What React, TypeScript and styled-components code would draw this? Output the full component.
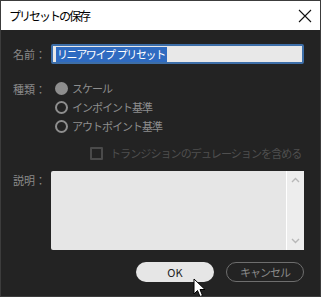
import styled, { createGlobalStyle } from "styled-components";

const GlobalStyle = createGlobalStyle`
  html, body {
    margin: 0;
    padding: 0;
    background: #232323;
  }
  body {
    font-family: "Noto Sans CJK JP", "Noto Sans", sans-serif;
  }
`;

const Window = styled.div`
  position: relative;
  width: 321px;
  height: 297px;
  box-sizing: border-box;
  border: 1px solid #3c3c3c;
  background: #232323;
  overflow: hidden;
`;

const TitleBar = styled.div`
  height: 29px;
  background: #ffffff;
  display: flex;
  align-items: center;
  justify-content: space-between;
  padding: 0 8px 0 8px;
  font-size: 12px;
  letter-spacing: -2px;
  color: #000;
`;

const Form = styled.div`
  display: grid;
  grid-template-columns: 50px 1fr;
  padding: 14px 16px 0 0;
`;

const Label = styled.div<{ $top?: number }>`
  text-align: right;
  padding-right: 5px;
  padding-top: ${(p) => p.$top ?? 0}px;
  font-size: 11px;
  color: #8a8a8a;
  line-height: 16px;
`;

const NameInput = styled.div`
  height: 20px;
  box-sizing: border-box;
  border: 2px solid #3d6ea8;
  border-radius: 2px;
  background: #e8e8e8;
  display: flex;
  align-items: center;
  padding-left: 3px;
`;

const Selected = styled.span`
  background: #2f6bc1;
  color: #fff;
  font-size: 11px;
  letter-spacing: -1.4px;
  line-height: 15px;
  padding: 0 2px 0 1px;
  white-space: pre;
`;

const Radios = styled.div`
  display: flex;
  flex-direction: column;
  gap: 1px;
  padding-top: 15px;
`;

const RadioRow = styled.div`
  display: flex;
  align-items: center;
  height: 18px;
  gap: 4px;
  font-size: 11px;
  letter-spacing: -1px;
  color: #8e8e8e;
`;

const RadioDot = styled.span<{ $on?: boolean }>`
  width: 13px;
  height: 13px;
  box-sizing: border-box;
  border-radius: 50%;
  border: 2px solid #8e8e8e;
  background: ${(p) => (p.$on ? "#8e8e8e" : "transparent")};
  margin-left: 4px;
`;

const CheckRow = styled.div`
  grid-column: 2;
  display: flex;
  align-items: center;
  gap: 7px;
  margin: 10px 0 0 39px;
  font-size: 11px;
  letter-spacing: -0.9px;
  color: #4f4f4f;
  white-space: nowrap;
`;

const CheckBox = styled.span`
  width: 13px;
  height: 13px;
  box-sizing: border-box;
  border: 2px solid #4a4a4a;
  border-radius: 1px;
`;

const TextArea = styled.div`
  margin-top: 10px;
  height: 79px;
  background: #e6e6e6;
  border-radius: 2px;
  display: flex;
  justify-content: flex-end;
`;

const ScrollBar = styled.div`
  width: 17px;
  border-left: 1px solid #ffffff;
  background: #ededed;
  display: flex;
  flex-direction: column;
  justify-content: space-between;
  align-items: center;
  padding: 6px 0;
`;

const Buttons = styled.div`
  display: flex;
  justify-content: flex-end;
  gap: 12px;
  padding: 12px 16px 0 0;
`;

const Button = styled.div<{ $primary?: boolean }>`
  width: 78px;
  height: 20px;
  box-sizing: border-box;
  border-radius: 10px;
  display: flex;
  align-items: center;
  justify-content: center;
  font-size: 11px;
  letter-spacing: ${(p) => (p.$primary ? "0" : "-1px")};
  background: ${(p) => (p.$primary ? "#e6e6e6" : "transparent")};
  border: ${(p) => (p.$primary ? "none" : "1px solid #6e6e6e")};
  color: ${(p) => (p.$primary ? "#222" : "#8a8a8a")};
`;

const Cursor = styled.svg`
  position: absolute;
  left: 192px;
  top: 277px;
`;

const Chevron = ({ up }: { up?: boolean }) => (
  <svg width="9" height="6" viewBox="0 0 9 6">
    <path
      d={up ? "M1 5 L4.5 1.5 L8 5" : "M1 1 L4.5 4.5 L8 1"}
      fill="none"
      stroke="#b8b8b8"
      strokeWidth="1.4"
    />
  </svg>
);

const App = () => (
  <>
    <GlobalStyle />
    <Window>
      <TitleBar>
        <span>プリセットの保存</span>
        <svg width="14" height="14" viewBox="0 0 14 14">
          <path d="M1 1 L13 13 M13 1 L1 13" stroke="#111" strokeWidth="1.1" />
        </svg>
      </TitleBar>
      <Form>
        <Label $top={2}>名前：</Label>
        <NameInput>
          <Selected>{"リニアワイプ  プリセット"}</Selected>
        </NameInput>
        <Label $top={17}>種類：</Label>
        <Radios>
          <RadioRow>
            <RadioDot $on />
            スケール
          </RadioRow>
          <RadioRow>
            <RadioDot />
            インポイント基準
          </RadioRow>
          <RadioRow>
            <RadioDot />
            アウトポイント基準
          </RadioRow>
        </Radios>
        <CheckRow>
          <CheckBox />
          トランジションのデュレーションを含める
        </CheckRow>
        <Label $top={11}>説明：</Label>
        <TextArea>
          <ScrollBar>
            <Chevron up />
            <Chevron />
          </ScrollBar>
        </TextArea>
      </Form>
      <Buttons>
        <Button $primary>OK</Button>
        <Button>キャンセル</Button>
      </Buttons>
      <Cursor width="14" height="21" viewBox="0 0 14 21">
        <path
          d="M1 1 L1 16 L4.5 12.5 L7 18.5 L9.5 17.5 L7 11.5 L12 11.5 Z"
          fill="#fff"
          stroke="#000"
          strokeWidth="1"
        />
      </Cursor>
    </Window>
  </>
);

export default App;
